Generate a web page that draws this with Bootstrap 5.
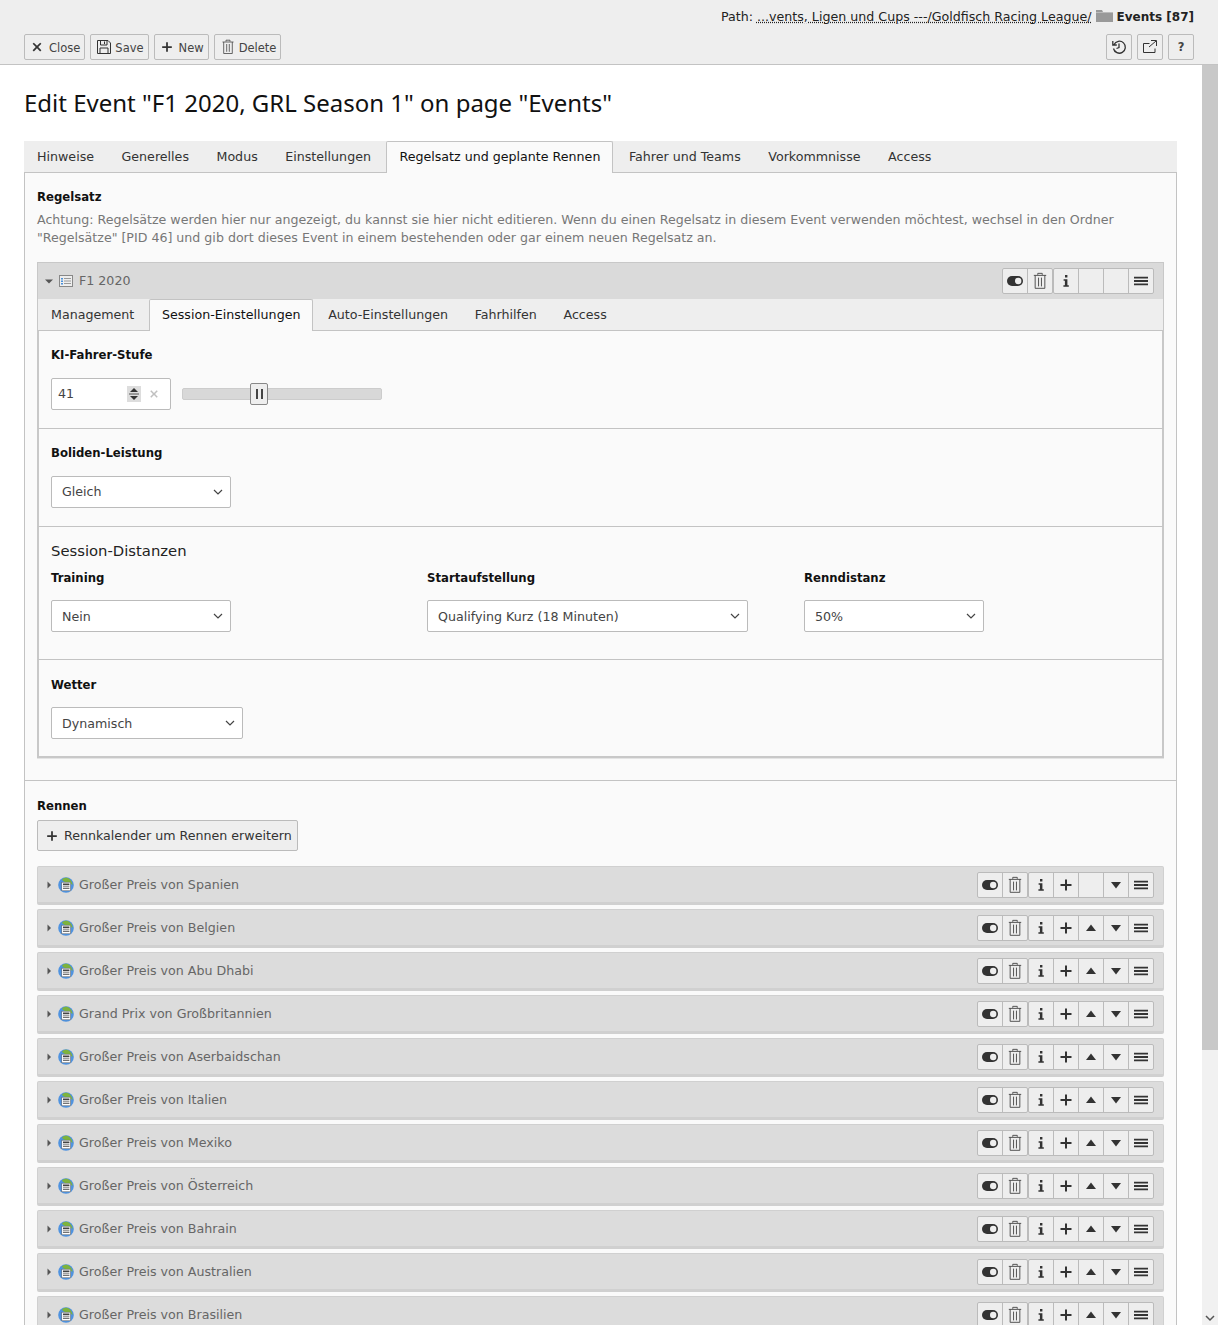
<!DOCTYPE html>
<html lang="de"><head><meta charset="utf-8"><title>Edit Event</title>
<link rel="stylesheet" href="https://cdn.jsdelivr.net/npm/bootstrap@5.3.0/dist/css/bootstrap.min.css">
<style>
html,body{height:100%;overflow:hidden}
body{font:12.65px/18px "DejaVu Sans",Verdana,sans-serif;color:#333;background:#fff}
a{text-decoration:none;color:inherit}
.tb{height:65px;background:#eee;border-bottom:1px solid #c3c3c3;padding:8px 24px 4px;flex:none}
.path{height:18px;margin-bottom:8px;color:#222;line-height:18px}
.path u{text-decoration:underline dotted}
.path b{font-size:12px}
.gap5{gap:5px}
.tbtn{height:26px;border:1px solid #bbb;border-radius:2px;background:#eee;color:#444;font-size:11.5px;display:inline-flex;align-items:center;padding:0 4px 0 5px;gap:5px}
.tbtn span{padding-top:2px}
.tg3{gap:3px}
.sq{width:26px;justify-content:center;padding:0}
.main{flex:1;min-height:0;overflow:hidden}
.cnt{flex:1;min-width:0;padding:0 25px 0 24px;overflow:hidden}
.sbar{width:16px;flex:none;background:#f1f1f1;position:relative}
.sthumb{height:985px;background:#c8c8c8}
.schev{position:absolute;right:3px;bottom:3px}
.ttl{font:400 24px/32px "Noto Sans",sans-serif;color:#111;margin:22px 0 22px}
.tabsx{display:flex;background:#eee;height:31px;padding-left:1px}
.tabsx a{padding:7px 12px 0;margin-right:3.5px;color:#333;height:31px}
.tabsx a.on{background:#fafafa;border:1px solid #c3c3c3;border-bottom:0;border-radius:2px 2px 0 0;padding:6px 12px 0;position:relative;height:32px;color:#111}
.tabsx.inner a{margin-right:2.7px}
.box{background:#fafafa;border:1px solid #c3c3c3;border-bottom:0;padding:15px 12px 0}
.lbl{font-weight:700;color:#111;display:block;font-size:11.7px}
.hint{color:#777;margin:5px 0 15px;font-size:12.62px}
.panel{border:1px solid #c8c8c8;border-bottom:2px solid #c8c8c8;box-shadow:0 1px 0 #e4e4e4}
.phead{height:36px;background:#dadada;display:flex;align-items:center;padding:0 9px 0 7px;color:#666}
.ptitle{margin-left:5px}
.sect{padding:15px 12px 18px;background:#fafafa;border-top:1px solid #c3c3c3;border-left:1px solid #c8c8c8;border-right:1px solid #c8c8c8}
.sect.first{padding-top:15px}
.sect.s3{padding:14px 12px 27px}
.sect.s4{padding:16px 12px 17px}
.ctl{height:32px;border:1px solid #bbb;border-radius:2px;background:#fff;color:#444;display:flex;align-items:center;padding:0 7px 0 10px;justify-content:space-between;margin-top:14px}
.s3 .ctl,.s4 .ctl{margin-top:13px}
.s3 .ctl span,.s4 .ctl span{padding-top:1px}
.w180{width:180px}.w192{width:192px}.w321{width:321px}
.num{width:120px;padding:0 10px 0 6px;margin-top:0}
.kirow{gap:11px;margin-top:14px}
.gap7{gap:7px}
.slider{width:200px;height:12px;background:#d8d8d8;border:1px solid #ccc;border-radius:2px;position:relative}
.knob{position:absolute;left:67px;top:-6px;width:18px;height:22px;background:#eee;border:1px solid #888;border-radius:2px;display:flex;align-items:center;justify-content:center;gap:3px}
.knob i{display:block;width:2px;height:10px;background:#444}
.h5x{font-size:14.8px;color:#222;line-height:20px;margin-bottom:8px}
.c1{width:376px}.c2{width:377px}
.wide{border-top:1px solid #c3c3c3;margin:22px -12px 0;height:0}
.lblr{margin-top:16px}
.addbtn{height:31px;border:1px solid #bbb;border-radius:2px;background:#eee;color:#333;display:inline-flex;align-items:center;padding:0 5px 0 7px;gap:5px;margin-top:5px;vertical-align:top}
.rw{height:39px;background:#dcdcdc;border:1px solid #d0d0d0;border-bottom:3px solid #d0d0d0;border-radius:2px;margin-bottom:4px;display:flex;align-items:center;padding:0 9px 0 7px;color:#666}
.rw .ptitle{padding-top:1px}
.rows{margin-top:15px}
.grp{display:flex;border:1px solid #bbb;border-radius:2px;background:#eee;height:26px}
.grp>span{width:25px;display:flex;align-items:center;justify-content:center;border-right:1px solid #bbb}
.grp>span:last-child{border-right:0;width:24px}
.mla{margin-left:auto}
.ms5{margin-left:5px}
svg{flex:none;display:block}
</style></head>
<body class="d-flex flex-column">
<svg width="0" height="0" class="position-absolute">
<symbol id="trash" viewBox="0 0 16 16"><path d="M6 2.500V1.200h4v1.300M2.500 3h11M3.700 3v11.500h8.600V3M6.700 5v7.800M9.300 5v7.800" fill="none" stroke="#444" stroke-width=".8"/></symbol>
<symbol id="tog" viewBox="0 0 16 16"><rect y="3" width="16" height="10" rx="5" fill="#333"/><circle cx="11.200" cy="8" r="3.200" fill="#eee"/></symbol>
<symbol id="inf" viewBox="0 0 16 16"><path d="M7 2h2.400v2.400H7zM5.600 6.200h3.800v6.100h1.400v1.500H5.400v-1.500h1.500V7.700H5.600z" fill="#333"/></symbol>
<symbol id="plus" viewBox="0 0 16 16"><path d="M7 2.500h2V7h4.500v2H9v4.500H7V9H2.500V7H7z" fill="#333"/></symbol>
<symbol id="up" viewBox="0 0 16 16"><path d="M8 4.500l5 6.500H3z" fill="#333"/></symbol>
<symbol id="dn" viewBox="0 0 16 16"><path d="M3 5h10l-5 6.500z" fill="#333"/></symbol>
<symbol id="menu" viewBox="0 0 16 16"><path d="M1 3.700h14v1.900H1zM1 7.050h14v1.900H1zM1 10.400h14v1.900H1z" fill="#333"/></symbol>
<symbol id="x" viewBox="0 0 16 16"><path d="M4.400 3L8 6.600 11.600 3 13 4.400 9.400 8 13 11.600 11.600 13 8 9.400 4.400 13 3 11.600 6.600 8 3 4.400z" fill="#333"/></symbol>
<symbol id="tr" viewBox="0 0 8 8"><path d="M2.500 0.500L6 4 2.500 7.500z" fill="#555"/></symbol>
<symbol id="glob" viewBox="0 0 16 16"><circle cx="8" cy="8" r="7.800" fill="#4f93e0"/><path d="M4 2.500c2-2.500 6-2.500 8 0 2 2 2.500 4 2.500 5.500L11 5.500 8 5.500 5 4z" fill="#7db33d"/><rect x="3.800" y="5.200" width="8.800" height="8.600" fill="#fff" stroke="#555" stroke-width=".5"/><path d="M5 6.500h6.400v1.800H5zM5 9.400h6.400v.9H5zM5 11.200h6.400v.9H5z" fill="#444"/></symbol>
<symbol id="chev" viewBox="0 0 10 6"><path d="M1 1l4 4 4-4" fill="none" stroke="#444" stroke-width="1.200"/></symbol>
</svg>
<header class="tb">
<div class="path text-end">Path: <u>...vents, Ligen und Cups ---/Goldfisch Racing League/</u> <svg class="d-inline-block align-text-top" width="17" height="14" viewBox="0 0 17 14"><path d="M0 1h6l1 2h10v10H0z" fill="#999"/><path d="M0 3h17v1H0z" fill="#bbb"/></svg> <b>Events [87]</b></div>
<div class="d-flex justify-content-between">
<div class="d-flex gap5">
<a class="tbtn"><svg width="14" height="14"><use href="#x"/></svg><span>Close</span></a>
<a class="tbtn tg3"><svg width="16" height="16" viewBox="0 0 16 16"><path d="M1.500 1.500h10.500l2.500 2.500v10.500h-13zM4.500 1.500v4.500h6.500v-4.500M8.500 2.500v2.500M4 14.500v-5.500h8v5.500" fill="none" stroke="#333"/></svg><span>Save</span></a>
<a class="tbtn"><svg width="14" height="14"><use href="#plus"/></svg><span>New</span></a>
<a class="tbtn tg3"><svg width="16" height="16"><use href="#trash"/></svg><span>Delete</span></a>
</div>
<div class="d-flex gap5">
<a class="tbtn sq"><svg width="16" height="16" viewBox="0 0 16 16"><path d="M3 5.500a6 6 0 1 1-.5 4M1.800 2v4h4M8 4.500v4l-2.500 1" fill="none" stroke="#333" stroke-width="1.300"/></svg></a>
<a class="tbtn sq"><svg width="16" height="16" viewBox="0 0 16 16"><path d="M13 9.500v4H1.500v-9h6M9 1.500h5.500V7M14 2L7 8" fill="none" stroke="#333"/></svg></a>
<a class="tbtn sq"><b>?</b></a>
</div></div>
</header>
<div class="main d-flex">
<main class="cnt">
<h1 class="ttl">Edit Event "F1 2020, GRL Season 1" on page "Events"</h1>
<div class="tabsx"><a>Hinweise</a><a>Generelles</a><a>Modus</a><a>Einstellungen</a><a class="on">Regelsatz und geplante Rennen</a><a>Fahrer und Teams</a><a>Vorkommnisse</a><a>Access</a></div>
<div class="box">
<label class="lbl">Regelsatz</label>
<p class="hint">Achtung: Regelsätze werden hier nur angezeigt, du kannst sie hier nicht editieren. Wenn du einen Regelsatz in diesem Event verwenden möchtest, wechsel in den Ordner "Regelsätze" [PID 46] und gib dort dieses Event in einem bestehenden oder gar einem neuen Regelsatz an.</p>
<div class="panel">
<div class="phead"><svg width="8" height="8" viewBox="0 0 8 8"><path d="M0 2.500h8L4 6.500z" fill="#555"/></svg><svg class="ms5" width="16" height="16" viewBox="0 0 16 16"><rect x="1.500" y="2.500" width="13" height="11" fill="#eee" stroke="#888"/><path d="M3 5h2v1.500H3zM3 7.500h2V9H3zM3 10h2v1.500H3z" fill="#4a90d9"/><path d="M6 5h7v1H6zM6 7.500h7v1H6zM6 10h7v1H6z" fill="#999"/></svg><span class="ptitle">F1 2020</span>
<div class="grp mla"><span><svg width="16" height="16"><use href="#tog"/></svg></span><span><svg width="18" height="18"><use href="#trash"/></svg></span></div>
<div class="grp"><span><svg width="16" height="16"><use href="#inf"/></svg></span><span></span><span></span><span><svg width="16" height="16"><use href="#menu"/></svg></span></div></div>
<div class="tabsx inner"><a>Management</a><a class="on">Session-Einstellungen</a><a>Auto-Einstellungen</a><a>Fahrhilfen</a><a>Access</a></div>
<div class="sect first"><label class="lbl">KI-Fahrer-Stufe</label>
<div class="d-flex align-items-center kirow"><div class="ctl num"><span>41</span><span class="d-flex align-items-center gap7"><svg width="14" height="16" viewBox="0 0 14 16"><rect width="14" height="16" fill="#ddd"/><path d="M7 2l4 4H3zM3 10h8l-4 4z" fill="#333"/><path d="M2 8h10" stroke="#555"/></svg><svg width="12" height="12"><use href="#x" opacity=".3"/></svg></span></div>
<div class="slider"><div class="knob"><i></i><i></i></div></div></div></div>
<div class="sect"><label class="lbl">Boliden-Leistung</label><div class="ctl w180"><span>Gleich</span><svg width="10" height="6"><use href="#chev"/></svg></div></div>
<div class="sect s3"><div class="h5x">Session-Distanzen</div>
<div class="d-flex"><div class="c1"><label class="lbl">Training</label><div class="ctl w180"><span>Nein</span><svg width="10" height="6"><use href="#chev"/></svg></div></div>
<div class="c2"><label class="lbl">Startaufstellung</label><div class="ctl w321"><span>Qualifying Kurz (18 Minuten)</span><svg width="10" height="6"><use href="#chev"/></svg></div></div>
<div><label class="lbl">Renndistanz</label><div class="ctl w180"><span>50%</span><svg width="10" height="6"><use href="#chev"/></svg></div></div></div></div>
<div class="sect s4"><label class="lbl">Wetter</label><div class="ctl w192"><span>Dynamisch</span><svg width="10" height="6"><use href="#chev"/></svg></div></div>
</div>
<div class="wide"></div>
<label class="lbl lblr">Rennen</label>
<a class="addbtn"><svg width="14" height="14"><use href="#plus"/></svg>Rennkalender um Rennen erweitern</a>
<div class="rows" id="rows"></div>
</div>
</main>
<div class="sbar"><div class="sthumb"></div><svg class="schev" width="10" height="7" viewBox="0 0 10 7"><path d="M1 1l4 4 4-4" fill="none" stroke="#555" stroke-width="1.500"/></svg></div>
</div>
<script>
const s=(n,z=16)=>`<span><svg width="${z}" height="${z}"><use href="#${n}"/></svg></span>`;
const names=["Großer Preis von Spanien","Großer Preis von Belgien","Großer Preis von Abu Dhabi","Grand Prix von Großbritannien","Großer Preis von Aserbaidschan","Großer Preis von Italien","Großer Preis von Mexiko","Großer Preis von Österreich","Großer Preis von Bahrain","Großer Preis von Australien","Großer Preis von Brasilien"];
document.getElementById('rows').innerHTML=names.map((n,i)=>`<div class="rw"><svg width="8" height="8"><use href="#tr"/></svg><svg class="ms5" width="16" height="16"><use href="#glob"/></svg><span class="ptitle">${n}</span><div class="grp mla">${s('tog')}${s('trash',18)}</div><div class="grp">${s('inf')}${s('plus')}${i?s('up'):'<span></span>'}${s('dn')}${s('menu')}</div></div>`).join('');
</script>
<script src="https://cdn.jsdelivr.net/npm/bootstrap@5.3.0/dist/js/bootstrap.bundle.min.js"></script>
</body></html>
